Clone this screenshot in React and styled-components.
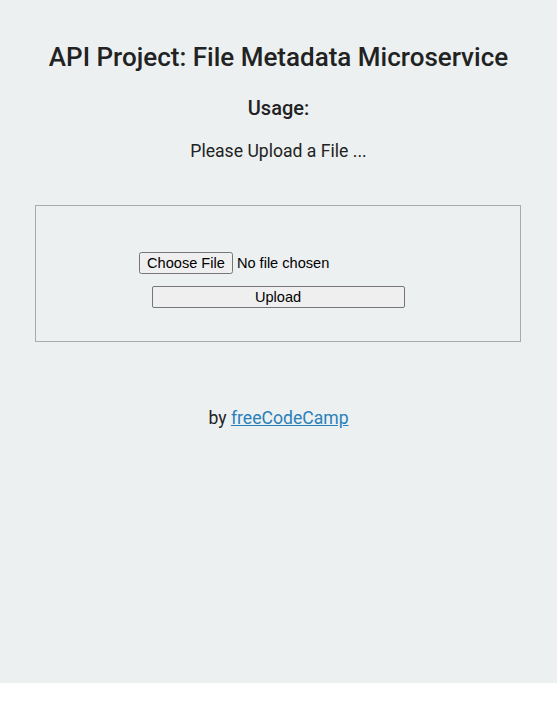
import React from 'react';
import styled, { createGlobalStyle } from 'styled-components';

const GlobalStyle = createGlobalStyle`
  body {
    margin: 0;
    font-family: Roboto, sans-serif;
    background: #ffffff;
  }
`;

const App = () => {
  return (
    <Page>
      <GlobalStyle />
      <Title>API Project: File Metadata Microservice</Title>
      <SubTitle>Usage:</SubTitle>
      <Hint>Please Upload a File ...</Hint>
      <Panel>
        <UploadForm onSubmit={(e) => e.preventDefault()}>
          <FileInput type="file" name="upfile" />
          <SubmitButton type="submit" value="Upload" />
        </UploadForm>
      </Panel>
      <Footer>
        by <FooterLink href="#">freeCodeCamp</FooterLink>
      </Footer>
    </Page>
  );
};

const Page = styled.div`
  box-sizing: border-box;
  height: 683px;
  padding: 42px 0 0;
  background-color: #ECF0F1;
  color: #222222;
  text-align: center;
`;

const Title = styled.h1`
  margin: 0;
  font-size: 26px;
  font-weight: 500;
  line-height: 30px;
`;

const SubTitle = styled.h3`
  margin: 24px 0 0;
  font-size: 20px;
  font-weight: 500;
  line-height: 24px;
`;

const Hint = styled.p`
  margin: 21px 0 0;
  font-size: 17.6px;
  line-height: 21px;
`;

const Panel = styled.div`
  box-sizing: border-box;
  width: 486px;
  height: 137px;
  margin: 43px 0 0 35px;
  border: 1px solid #aaaaaa;
  padding-top: 46px;
`;

const UploadForm = styled.form`
  display: flex;
  flex-direction: column;
  align-items: center;
  gap: 12px;
`;

const FileInput = styled.input`
  font-family: "Liberation Sans", Arial, sans-serif;
  font-size: 14.6px;
  color: #000000;
  margin-left: -2px;
`;

const SubmitButton = styled.input`
  box-sizing: border-box;
  width: 253px;
  height: 22px;
  padding: 0;
  font-family: "Liberation Sans", Arial, sans-serif;
  font-size: 14.6px;
  color: #000000;
  background: #efefef;
  border: 1px solid #767676;
  border-radius: 2px;
`;

const Footer = styled.p`
  margin: 66px 0 0;
  font-size: 17.6px;
  line-height: 21px;
`;

const FooterLink = styled.a`
  color: #2980b9;
`;

export default App;
